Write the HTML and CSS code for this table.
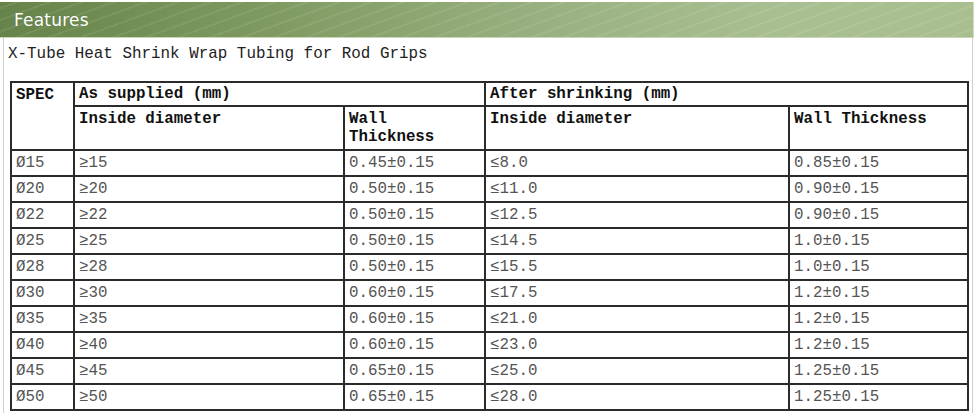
FILE: index.html
```html
<!DOCTYPE html>
<html>
<head>
<meta charset="utf-8">
<link rel="stylesheet" href="styles.css">
</head>
<body>
<div class="panel">
  <div class="panel-head"><span class="panel-title">Features</span></div>
  <div class="panel-body">
    <p class="intro">X-Tube Heat Shrink Wrap Tubing for Rod Grips</p>
    <table class="spec">
      <colgroup>
        <col class="c1"><col class="c2"><col class="c3"><col class="c4"><col class="c5">
      </colgroup>
      <thead>
        <tr class="r1">
          <th rowspan="2">SPEC</th>
          <th colspan="2">As supplied (mm)</th>
          <th colspan="2">After shrinking (mm)</th>
        </tr>
        <tr class="r2">
          <th>Inside diameter</th>
          <th>Wall Thickness</th>
          <th>Inside diameter</th>
          <th>Wall Thickness</th>
        </tr>
      </thead>
      <tbody>
        <tr><td>Ø15</td><td>≥15</td><td>0.45±0.15</td><td>≤8.0</td><td>0.85±0.15</td></tr>
        <tr><td>Ø20</td><td>≥20</td><td>0.50±0.15</td><td>≤11.0</td><td>0.90±0.15</td></tr>
        <tr><td>Ø22</td><td>≥22</td><td>0.50±0.15</td><td>≤12.5</td><td>0.90±0.15</td></tr>
        <tr><td>Ø25</td><td>≥25</td><td>0.50±0.15</td><td>≤14.5</td><td>1.0±0.15</td></tr>
        <tr><td>Ø28</td><td>≥28</td><td>0.50±0.15</td><td>≤15.5</td><td>1.0±0.15</td></tr>
        <tr><td>Ø30</td><td>≥30</td><td>0.60±0.15</td><td>≤17.5</td><td>1.2±0.15</td></tr>
        <tr><td>Ø35</td><td>≥35</td><td>0.60±0.15</td><td>≤21.0</td><td>1.2±0.15</td></tr>
        <tr><td>Ø40</td><td>≥40</td><td>0.60±0.15</td><td>≤23.0</td><td>1.2±0.15</td></tr>
        <tr><td>Ø45</td><td>≥45</td><td>0.65±0.15</td><td>≤25.0</td><td>1.25±0.15</td></tr>
        <tr><td>Ø50</td><td>≥50</td><td>0.65±0.15</td><td>≤28.0</td><td>1.25±0.15</td></tr>
      </tbody>
    </table>
  </div>
</div>
</body>
</html>
```

FILE: styles.css
```css
html, body {
  margin: 0;
  padding: 0;
  background: #fff;
}
.panel {
  width: 975px;
  padding-top: 2px;
}
.panel-head {
  height: 36px;
  width: 974px;
  box-sizing: border-box;
  border-bottom: 1px solid #c9d6b6;
  border-right: 1px solid #cfdcc0;
  background:
    repeating-linear-gradient(160deg, rgba(255,255,255,0) 0 5px, rgba(255,255,255,0.08) 5px 7px, rgba(255,255,255,0) 7px 11px),
    linear-gradient(90deg, #66844a 0%, #7c985e 25%, #98b080 55%, #aabf91 80%, #aabf8f 100%);
  display: flex;
  align-items: center;
}
.panel-title {
  font-family: "DejaVu Sans", sans-serif;
  font-size: 17px;
  color: #fff;
  padding-left: 14px;
  text-shadow: 0 0 1px rgba(60,80,40,0.5);
  letter-spacing: 0.2px;
}
.panel-body {
  margin-left: 3px;
  width: 970px;
  box-sizing: border-box;
  border-left: 1px solid #cfcfcf;
  border-right: 1px solid #cfcfcf;
  padding: 7px 0 6px 4px;
}
.intro {
  margin: 0;
  font-family: "Courier New", "Nimbus Mono PS", "Nimbus Mono L", FreeMono, "Liberation Mono", monospace;
  font-size: 15.9px;
  line-height: 18px;
  color: #222;
}
.spec {
  margin: 18px 0 0 2px;
  border-collapse: collapse;
  table-layout: fixed;
  width: 957px;
  font-family: "Courier New", "Nimbus Mono PS", "Nimbus Mono L", FreeMono, "Liberation Mono", monospace;
  font-size: 15.8px;
  line-height: 18px;
}
.c1 { width: 63px; }
.c2 { width: 270px; }
.c3 { width: 141px; }
.c4 { width: 304px; }
.c5 { width: 179px; }
.spec th, .spec td {
  border: 2px solid #2b2b2b;
  padding: 3px 4px;
  text-align: left;
  vertical-align: top;
}
.spec th {
  font-weight: bold;
  color: #111;
}
.spec .r1 th {
  vertical-align: middle;
  padding-top: 2px;
  padding-bottom: 2px;
}
.spec .r1 th[rowspan] {
  vertical-align: top;
  padding-top: 3px;
}
.spec td {
  color: #555;
  height: 18px;
}
```
